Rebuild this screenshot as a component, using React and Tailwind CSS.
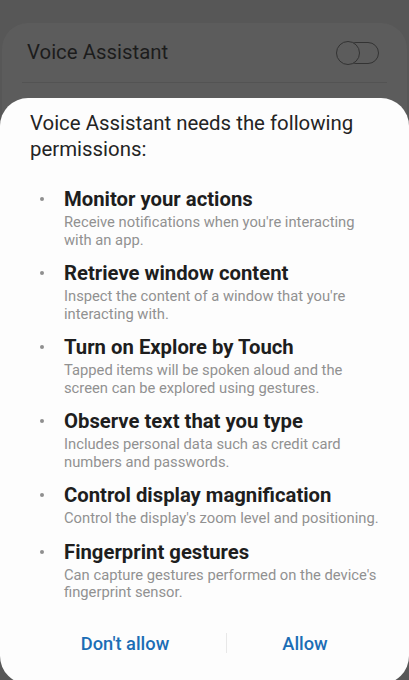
import React from "react";

const items = [
  { t: "Monitor your actions", d: ["Receive notifications when you're interacting", "with an app."] },
  { t: "Retrieve window content", d: ["Inspect the content of a window that you're", "interacting with."] },
  { t: "Turn on Explore by Touch", d: ["Tapped items will be spoken aloud and the", "screen can be explored using gestures."] },
  { t: "Observe text that you type", d: ["Includes personal data such as credit card", "numbers and passwords."] },
  { t: "Control display magnification", d: ["Control the display's zoom level and positioning."] },
  { t: "Fingerprint gestures", d: ["Can capture gestures performed on the device's", "fingerprint sensor."] },
];

export default function App() {
  return (
    <div
      className="relative h-[680px] w-[409px] overflow-hidden bg-[#575757]"
      style={{ fontFamily: "Roboto, 'Noto Sans', sans-serif" }}
    >
      <div className="mx-[2px] mt-[23px] h-[200px] rounded-[26px] bg-[#5c5c5c] px-[20px]">
        <div className="flex h-[59px] items-center justify-between pl-[5px] pr-[8px]">
          <span className="text-[20.4px] text-[#1c1c1c]">Voice Assistant</span>
          <div className="relative h-[24px] w-[43px]">
            <div className="absolute right-0 top-[1px] h-[22px] w-[34px] rounded-full border-[1.5px] border-[#333333]" />
            <div className="absolute left-0 top-0 h-[24px] w-[24px] rounded-full border-[1.5px] border-[#333333] bg-[#5c5c5c]" />
          </div>
        </div>
        <div className="h-px bg-[#535353]" />
      </div>

      <div className="absolute left-0 right-0 top-[98px] h-[586px] rounded-[28px] bg-[#fdfdfd]">
        <div className="pl-[30px] pr-[16px] pt-[12px] text-[20.4px] leading-[26px] text-[#242424]">
          Voice Assistant needs the following
          <br />
          permissions:
        </div>
        <div className="mt-[25px] flex flex-col gap-[12px]">
          {items.map((it) => (
            <div key={it.t} className="flex">
              <div className="flex w-[64px] shrink-0 justify-start pl-[40px] pt-[10px]">
                <div className="h-[4px] w-[4px] rounded-full bg-[#8f8f8f]" />
              </div>
              <div className="flex flex-col">
                <div className="mb-[3px] text-[20.3px] font-bold leading-[24px] text-[#1e1e1e]">{it.t}</div>
                {it.d.map((l) => (
                  <div key={l} className="whitespace-nowrap text-[14.75px] leading-[17.5px] text-[#919191]">{l}</div>
                ))}
              </div>
            </div>
          ))}
        </div>
        <div className="mt-[28px] flex items-center pl-[24px]">
          <div className="flex w-[202px] justify-center text-[18.3px] font-medium text-[#1b6db5]">Don't allow</div>
          <div className="h-[20px] w-px bg-[#e8e8e8]" />
          <div className="flex w-[156px] justify-center text-[18.3px] font-medium text-[#1b6db5]">Allow</div>
        </div>
      </div>
    </div>
  );
}
